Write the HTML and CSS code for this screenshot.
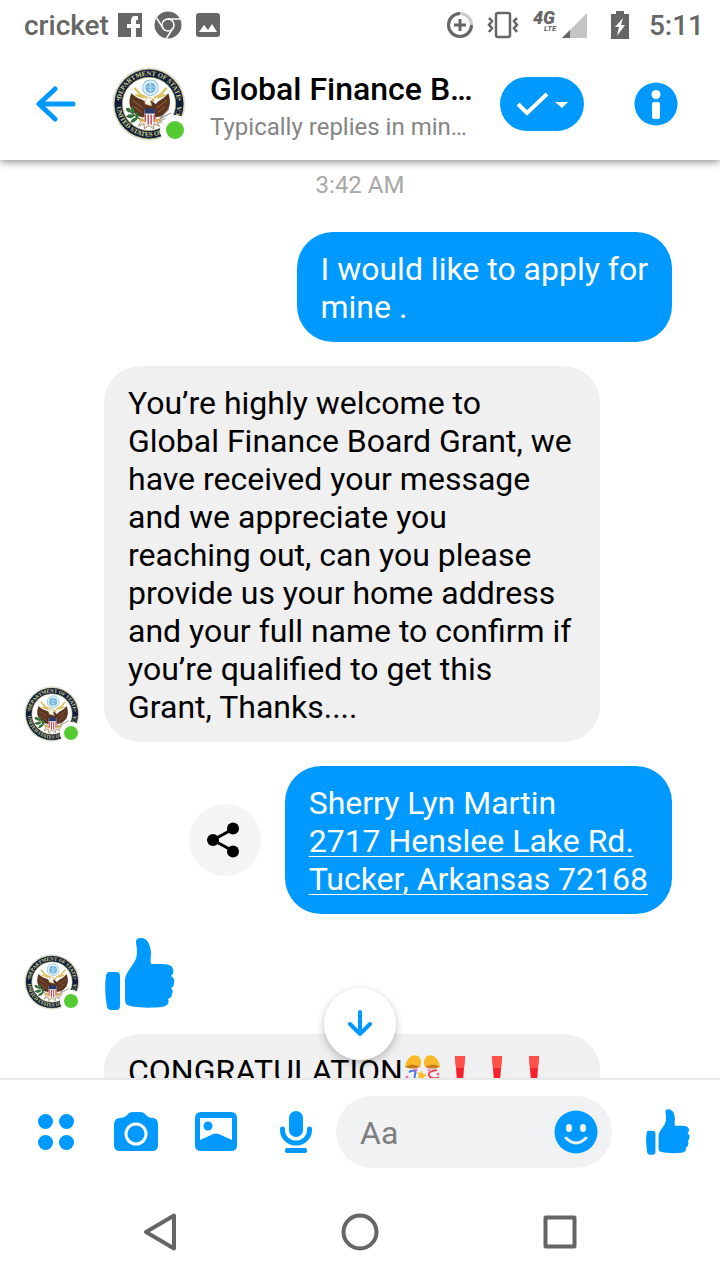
FILE: index.html
```html
<!DOCTYPE html>
<html lang="en">
<head>
  <meta charset="UTF-8">
  <meta name="viewport" content="width=device-width, initial-scale=1.0">
  <title>Messenger</title>
  <link rel="stylesheet" href="styles.css">
</head>
<body>
  <!-- shared shapes -->
  <svg class="defs" aria-hidden="true">
    <symbol id="seal" viewBox="0 0 100 100">
      <circle cx="50" cy="50" r="49.5" fill="#e4e4e2"/>
      <circle cx="50" cy="50" r="47.5" fill="#b9b878"/>
      <circle cx="50" cy="50" r="46.5" fill="#101c3c"/>
      <circle cx="50" cy="50" r="36" fill="#fff" stroke="#b9b878" stroke-width="1"/>
      <path id="arcTop" d="M11.5 50A38.5 38.5 0 0 1 88.5 50" fill="none"/>
      <path id="arcBottom" d="M6 50A44 44 0 0 0 94 50" fill="none"/>
      <text class="seal-text"><textPath href="#arcTop" startOffset="50%">DEPARTMENT OF STATE</textPath></text>
      <text class="seal-text"><textPath href="#arcBottom" startOffset="50%">UNITED STATES OF AMERICA</textPath></text>
      <circle cx="8.500" cy="44" r="1.300" fill="#d8d68a"/>
      <circle cx="91.500" cy="44" r="1.300" fill="#d8d68a"/>
      <!-- ribbon and globe -->
      <path d="M31 29l7 8 8 4M73 29l-7 8-8 4M33 38l9 3M71 38l-9 3" fill="none" stroke="#dfc264" stroke-width="3" stroke-linecap="round"/>
      <circle cx="52" cy="28" r="10.500" fill="#e8f3fa" stroke="#8fc3e4" stroke-width="1.500"/>
      <circle cx="52" cy="28" r="7" fill="#6cb0dc"/>
      <path d="M46 27h12M48 31h8M50 23h4M52 22v12" stroke="#d5ebf7" stroke-width="1"/>
      <!-- eagle -->
      <g transform="translate(-1 -2) scale(1 1.140)">
        <path d="M43 60l-6 12 7-3 1 6 6-4 6 4 1-6 7 3-6-12z" fill="#efeadb" stroke="#8d7559" stroke-width="1"/>
        <path d="M27 33c-4 9-3 17 3 22 4 4 7 6 13 6h18c6 0 9-2 13-6 6-5 7-13 3-22-3 3-6 6-9 7-4 2-6 3-8 6l-6-5-6 5c-2-3-4-5-8-6-5-1-9-4-13-7z" fill="#5d351f"/>
        <path d="M29 41c5 5 9 5 13 9M31 48c4 4 7 5 10 8M75 41c-5 5-9 5-13 9M73 48c-4 4-7 5-10 8" fill="none" stroke="#936342" stroke-width="1.200"/>
        <path d="M46 46c-2-6 2-10 7-8l5 3-5 1 2 6z" fill="#f7f4e8" stroke="#a58b5a" stroke-width=".7"/>
        <path d="M55 39l5 2-5 1z" fill="#e3b53b"/>
        <path d="M45 52h14v11c0 5-4 7-7 8-3-1-7-3-7-8z" fill="#fff"/>
        <path d="M46 58v9M50 58v12M54 58v12M58 58v9" stroke="#c9465a" stroke-width="2"/>
        <path d="M45 51h14v6H45z" fill="#27386f"/>
      </g>
      <!-- olive branch and arrows -->
      <path d="M19 57c7 3 11 9 20 14" fill="none" stroke="#39683a" stroke-width="1.500"/>
      <path d="M19 56c3-2 7 0 7 5-4 1-7-1-7-5zM27 53c4 3 4 7 2 11-4-3-4-8-2-11zM19 67c3-4 8-4 12-1-4 4-8 4-12 1zM25 75c1-5 5-7 10-7-1 5-6 8-10 7zM34 60c3 3 3 6 0 10-3-4-3-7 0-10z" fill="#34703a"/>
      <path d="M63 71l17-9M63 73l19-6M63 75l17-2M65 69l12-12" stroke="#918d84" stroke-width="1.500"/>
      <path d="M38 71l6 2M58 73l6-2" stroke="#dba83d" stroke-width="3" stroke-linecap="round"/>
    </symbol>
    <symbol id="thumb" viewBox="0 0 70 72">
      <path d="M4 34h7q4 0 4 4v30q0 4-4 4H6q-3 0-4-3Q-1 52 1 37q1-3 3-3z"/>
      <path d="M36 0c6 0 9 6 10 14 0 5-1 9 0 12h9c8 0 12 1 13 5 1 3 0 5-2 7 3 2 4 4 3 7 0 3-1 4-3 5 2 2 2 4 1 6 0 3-2 4-4 5 2 4-1 7-6 8-10 1-23 1-32-1-4-1-5-3-5-7V42c0-4 2-7 4-10 4-6 8-10 8-18 0-5-1-8-1-10 0-3 2-4 5-4z"/>
    </symbol>
    <symbol id="bang" viewBox="0 0 37 37">
      <path d="M15 4h10l-2 25h-6z" fill="#f5222d"/>
      <path d="M15 4h10l-1 12h-8z" fill="#ff5147"/>
      <circle cx="20" cy="34" r="3" fill="#f5222d"/>
    </symbol>
  </svg>

  <div class="phone">
    <div class="status-bar">
      <span class="carrier">cricket</span>
      <svg class="status-facebook" width="24" height="24" viewBox="0 0 24 24"><path fill="#666" d="M0 0h24v24h-6v-9h4v-4h-4V8q0-1 1-1h1V3h-3q-4 0-4 5v3H9v4h4v9H0z"/></svg>
      <svg class="status-chrome" width="28" height="28" viewBox="0 0 28 28">
        <circle cx="14" cy="14" r="13.500" fill="#666"/>
        <circle cx="14" cy="14" r="6" fill="none" stroke="#fff" stroke-width="1.500"/>
        <path d="M14 8h13M9 17L2 6M19 17l-7 11" stroke="#fff" stroke-width="1.500"/>
      </svg>
      <svg width="24" height="24" viewBox="0 0 24 24"><rect width="24" height="24" rx="3" fill="#666"/><path fill="#fff" d="M3 19l5-7 4 5 4-6 5 8z"/></svg>
      <div class="status-right">
        <svg class="status-saver" width="28" height="28" viewBox="0 0 28 28" fill="none" stroke-width="3">
          <circle cx="14" cy="14" r="11.500" stroke="#ccc"/>
          <path stroke="#666" d="M14 2.500A11.500 11.500 0 1 0 25.500 14M14 8v12M8 14h12"/>
        </svg>
        <svg class="status-vibrate" width="32" height="28" viewBox="0 0 32 28" fill="none" stroke="#666" stroke-width="2.500">
          <rect x="9" y="2" width="14" height="24" rx="2"/>
          <path d="M2 7l3 3-3 4 3 3-3 4M30 7l-3 3 3 4-3 3 3 4"/>
        </svg>
        <svg class="status-signal" width="56" height="28" viewBox="0 0 56 28">
          <text class="net-gen" x="0" y="13">4G</text>
          <text class="net-type" x="11" y="20">LTE</text>
          <path fill="#c4c4c4" d="M29 27L54 2v25z"/>
          <path fill="#666" d="M29 27l8-8v8z"/>
        </svg>
        <svg class="status-battery" width="18" height="28" viewBox="0 0 18 28"><path fill="#666" d="M5 0h8v3h5v25H0V3h5z"/><path fill="#fff" d="M12 7l-8 9h4l-2 9 8-11h-4z"/></svg>
        <span>5:11</span>
      </div>
    </div>

    <header class="header">
      <button class="back" aria-label="Back">
        <svg width="40" height="38" viewBox="0 0 40 38" fill="none" stroke="#0099ff" stroke-width="5" stroke-linecap="round" stroke-linejoin="round"><path d="M37 19H4M19 4L3 19l16 15"/></svg>
      </button>
      <div class="avatar avatar-large">
        <svg><use href="#seal"/></svg>
        <span class="online"></span>
      </div>
      <div class="contact">
        <h1>Global Finance B…</h1>
        <p>Typically replies in min…</p>
      </div>
      <button class="done" aria-label="Mark as done">
        <svg width="52" height="26" viewBox="0 0 52 26"><path d="M2 13l9 9L31 3" fill="none" stroke="#fff" stroke-width="4"/><path d="M39 11h13l-6 6z" fill="#fff"/></svg>
      </button>
      <button class="info" aria-label="Info">
        <svg width="44" height="44" viewBox="0 0 44 44"><circle cx="22" cy="22" r="21.500" fill="#0099ff"/><circle cx="22" cy="12.500" r="4.500" fill="#fff"/><rect x="18" y="20" width="8" height="17" rx="2" fill="#fff"/></svg>
      </button>
    </header>

    <main class="chat">
      <div class="time">3:42 AM</div>

      <div class="row sent">
        <div class="bubble">I would like to apply for<br>mine .</div>
      </div>

      <div class="row">
        <div class="avatar">
          <svg><use href="#seal"/></svg>
          <span class="online"></span>
        </div>
        <div class="bubble">You’re highly welcome to Global Finance Board Grant, we have received your message and we appreciate you reaching out, can you please provide us your home address and your full name to confirm if you’re qualified to get this Grant, Thanks....</div>
      </div>

      <div class="row sent">
        <button class="share" aria-label="Share">
          <svg width="36" height="36" viewBox="0 0 36 36"><path d="M26 7L6 18l20 11" fill="none" stroke="#000" stroke-width="3"/><circle cx="6" cy="18" r="6"/><circle cx="26" cy="6.500" r="6"/><circle cx="26" cy="29.500" r="6"/></svg>
        </button>
        <div class="bubble">Sherry Lyn Martin<br><a href="#">2717 Henslee Lake Rd.<br>Tucker, Arkansas 72168</a></div>
      </div>

      <div class="row">
        <div class="avatar">
          <svg><use href="#seal"/></svg>
          <span class="online"></span>
        </div>
        <svg class="sticker" width="72" height="72"><use href="#thumb"/></svg>
      </div>

      <div class="row no-avatar">
        <div class="bubble tall">CONGRATULATION<svg class="emoji" viewBox="0 0 37 37">
            <path d="M2 15C3 6 10 1 15 4q5 4 2 11-7-4-15 0zM37 15C36 6 29 1 24 4q-5 4-2 11 7-4 15 0z" fill="#f7b928"/>
            <path d="M2 15q7-5 15 0-7 3-15 0zM37 15q-7-5-15 0 7 3 15 0z" fill="#c77a13"/>
            <path d="M6 20q8-4 6 3t4 7" fill="none" stroke="#4178e8" stroke-width="2"/>
            <path d="M34 18q-9 1-8 5t8 3q-3 3-9 3" fill="none" stroke="#ed4763" stroke-width="2"/>
            <path d="M19 18l1 4 4 1-3 2v4l-3-3-4 1 2-4-2-3 4 1z" fill="#fbbf24"/>
            <circle cx="4" cy="25" r="1.500" fill="#ef6da7"/><circle cx="13" cy="18" r="1.500" fill="#e76ab5"/><circle cx="26" cy="18" r="1.500" fill="#f48bb3"/><circle cx="35" cy="22" r="1.500" fill="#ef6da7"/>
          </svg><svg class="emoji"><use href="#bang"/></svg><svg class="emoji"><use href="#bang"/></svg><svg class="emoji"><use href="#bang"/></svg></div>
      </div>

      <button class="scroll-down" aria-label="Scroll to latest">
        <svg width="28" height="30" viewBox="0 0 28 30" fill="none" stroke="#0099ff" stroke-width="4" stroke-linecap="round" stroke-linejoin="round"><path d="M14 3v22M4 15l10 10 10-10"/></svg>
      </button>
    </main>

    <footer class="composer">
      <button class="tool" aria-label="More">
        <svg width="48" height="48" viewBox="0 0 48 48"><circle cx="13.500" cy="13.500" r="7.500"/><circle cx="34.500" cy="13.500" r="7.500"/><circle cx="13.500" cy="34.500" r="7.500"/><circle cx="34.500" cy="34.500" r="7.500"/></svg>
      </button>
      <button class="tool" aria-label="Camera">
        <svg width="48" height="48" viewBox="0 0 48 48"><path d="M8 10q4 0 6-2l3-3q2-1 4-1h7q2 0 4 1l3 3q2 2 6 2 5 0 5 7v20q0 6-6 6H8q-6 0-6-6V17q0-7 6-7z"/><circle cx="24" cy="26" r="10" fill="none" stroke="#fff" stroke-width="3"/></svg>
      </button>
      <button class="tool" aria-label="Gallery">
        <svg width="48" height="48" viewBox="0 0 48 48"><path fill-rule="evenodd" d="M9 4h30q6 0 6 6v27q0 6-6 6H9q-6 0-6-6V10q0-6 6-6zm-1 6v22l11-5q5-3 10 0l11 5V10z"/><circle cx="16" cy="18" r="4.500"/></svg>
      </button>
      <button class="tool" aria-label="Voice">
        <svg width="48" height="48" viewBox="0 0 48 48"><rect x="17" y="3" width="14" height="26" rx="7"/><path d="M10.500 21v1a13.500 13 0 0 0 27 0v-1" fill="none" stroke="#0099ff" stroke-width="5" stroke-linecap="round"/><rect x="13" y="40" width="22" height="5" rx="2"/></svg>
      </button>
      <div class="field">
        <input type="text" placeholder="Aa" aria-label="Message">
        <button class="smile" aria-label="Emoji">
          <svg width="44" height="44" viewBox="0 0 44 44"><circle cx="22" cy="22" r="21.500" fill="#0099ff"/><ellipse cx="15" cy="18" rx="3" ry="4" fill="#f1f2f4"/><ellipse cx="29" cy="18" rx="3" ry="4" fill="#f1f2f4"/><path d="M12 28q10 10 20 0" fill="none" stroke="#f1f2f4" stroke-width="3" stroke-linecap="round"/></svg>
        </button>
      </div>
      <button class="tool" aria-label="Send like">
        <svg width="44" height="46"><use href="#thumb"/></svg>
      </button>
    </footer>

    <nav class="nav-bar">
      <button aria-label="Back">
        <svg width="40" height="40" viewBox="0 0 40 40"><path d="M34 3.500v33L6 20z"/></svg>
      </button>
      <button aria-label="Home">
        <svg width="40" height="40" viewBox="0 0 40 40"><circle cx="20" cy="20" r="16.500"/></svg>
      </button>
      <button aria-label="Recent apps">
        <svg width="40" height="40" viewBox="0 0 40 40"><rect x="5.500" y="5.500" width="29" height="29"/></svg>
      </button>
    </nav>
  </div>
</body>
</html>
```

FILE: styles.css
```css
* {
  box-sizing: border-box;
}

body {
  margin: 0;
  font-family: Roboto, sans-serif;
  background: #fff;
  color: #000;
}

button {
  display: flex;
  justify-content: center;
  align-items: center;
  flex-shrink: 0;
  padding: 0;
  border: none;
  background: none;
}

svg {
  display: block;
  flex-shrink: 0;
}

.defs {
  display: none;
}

.phone {
  display: flex;
  flex-direction: column;
  height: 100vh;
}

/* status bar */
.status-bar {
  position: relative;
  z-index: 2;
  display: flex;
  align-items: center;
  height: 48px;
  padding: 2px 16px 0 24px;
  background: #fff;
  font-size: 28px;
  font-weight: 500;
  color: #666;
}

.status-facebook {
  margin-left: 9px;
}

.status-chrome {
  margin: 0 14px 0 12px;
}

.status-right {
  display: flex;
  align-items: center;
  margin-left: auto;
}

.status-vibrate {
  margin: 0 14px 0 13px;
}

.status-battery {
  margin: 0 20px 0 22px;
}

.net-gen {
  font-size: 18px;
  font-weight: 900;
  font-style: italic;
  fill: #666;
}

.net-type {
  font-size: 8px;
  font-weight: 700;
  font-style: italic;
  fill: #666;
}

/* header */
.header {
  position: relative;
  z-index: 1;
  display: flex;
  align-items: center;
  height: 112px;
  padding: 0 42px 0 36px;
  background: #fff;
  box-shadow: 0 2px 8px rgba(0, 0, 0, 0.45);
}

.contact {
  flex: 1;
  min-width: 0;
  margin-left: 24px;
  padding-top: 4px;
  white-space: nowrap;
}

.contact h1 {
  margin: 0;
  font-size: 32px;
  line-height: 38px;
  font-weight: 500;
}

.contact p {
  margin: 4px 0 0;
  font-size: 24px;
  line-height: 30px;
  color: #858585;
}

.done {
  width: 84px;
  height: 54px;
  margin-right: 50px;
  border-radius: 27px;
  background: #0099ff;
}

/* avatars */
.avatar {
  position: relative;
  flex-shrink: 0;
  width: 56px;
  height: 56px;
}

.avatar svg {
  width: 100%;
  height: 100%;
}

.seal-text {
  font-family: "Liberation Serif", serif;
  font-size: 9px;
  font-weight: 700;
  text-anchor: middle;
  fill: #d8d68a;
}

.online {
  position: absolute;
  right: -2px;
  bottom: -2px;
  width: 22px;
  height: 22px;
  border: 4px solid #fff;
  border-radius: 50%;
  background: #54cb33;
}

.avatar-large {
  width: 74px;
  height: 74px;
  margin-left: 36px;
}

.avatar-large .online {
  right: -4px;
  bottom: -4px;
  width: 30px;
  height: 30px;
  border-width: 6px;
}

/* conversation */
.chat {
  position: relative;
  flex: 1;
  min-height: 0;
  display: flex;
  flex-direction: column;
  gap: 24px;
  overflow: hidden;
}

.time {
  flex-shrink: 0;
  padding: 8px 0 6px;
  text-align: center;
  font-size: 24px;
  line-height: 34px;
  color: #a8a8a8;
}

.row {
  display: flex;
  flex-shrink: 0;
  align-items: flex-end;
  gap: 24px;
  padding: 0 48px 0 24px;
}

.row.sent {
  justify-content: flex-end;
  align-items: center;
}

.row.no-avatar {
  padding-left: 104px;
}

.bubble {
  max-width: 496px;
  padding: 18px 24px 16px;
  border-radius: 36px;
  background: #f0f0f0;
  font-size: 32px;
  line-height: 38px;
}

.sent .bubble {
  background: #0099ff;
  color: #fff;
}

.bubble a {
  color: inherit;
  text-decoration-thickness: 1px;
  text-underline-offset: 4px;
}

.bubble.tall {
  width: 496px;
  min-height: 110px;
}

.sticker {
  fill: #0099ff;
}

.emoji {
  display: inline-block;
  width: 37px;
  height: 37px;
  vertical-align: top;
}

.share {
  width: 72px;
  height: 72px;
  border-radius: 50%;
  background: #f4f4f4;
}

.scroll-down {
  position: absolute;
  left: 50%;
  bottom: 18px;
  width: 72px;
  height: 72px;
  margin-left: -36px;
  border-radius: 50%;
  background: #fff;
  box-shadow: 0 3px 8px rgba(0, 0, 0, 0.25);
}

/* composer */
.composer {
  display: flex;
  align-items: center;
  height: 106px;
  padding: 0 28px 0 32px;
  border-top: 2px solid #e8e8e8;
}

.tool {
  width: 48px;
  height: 48px;
  margin-right: 32px;
  fill: #0099ff;
}

.field {
  flex: 1;
  min-width: 0;
  display: flex;
  align-items: center;
  height: 72px;
  margin-left: -16px;
  padding: 0 14px 0 24px;
  border-radius: 36px;
  background: #f1f2f4;
}

.field input {
  flex: 1;
  min-width: 0;
  padding: 2px 0 0;
  border: none;
  outline: none;
  background: none;
  font-family: inherit;
  font-size: 32px;
}

.field input::placeholder {
  color: #7e7e7e;
}

.field + .tool {
  margin: 0 0 0 32px;
}

/* system navigation */
.nav-bar {
  display: flex;
  height: 96px;
  padding: 0 60px;
}

.nav-bar button {
  flex: 1;
}

.nav-bar svg {
  fill: none;
  stroke: #666;
  stroke-width: 4;
  stroke-linejoin: round;
}
```
